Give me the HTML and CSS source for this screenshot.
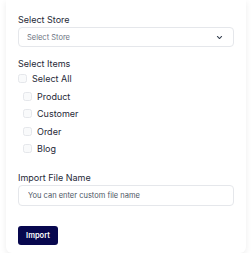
FILE: index.html
```html
<!DOCTYPE html>
<html lang="en">

<head>
    <meta charset="UTF-8">
    <meta name="viewport" content="width=device-width, initial-scale=1">
    <title>Import</title>
    <link rel="stylesheet" href="styles.css">
</head>

<body>

    <div class="card">
        <div class="field">
            <label class="label">Select Store</label>
            <div class="select">
                <span>Select Store</span>
                <svg class="chevron" width="7" height="7" viewBox="0 0 10 10">
                    <path d="M2 3.5 L5 6.5 L8 3.5" fill="none" stroke="#374151" stroke-width="1.5" stroke-linecap="round" stroke-linejoin="round" />
                </svg>
            </div>
        </div>

        <div class="field items-field">
            <label class="label">Select Items</label>
            <div class="check-row check-all">
                <span class="box"></span>
                <span>Select All</span>
            </div>
            <div class="items">
                <div class="check-row"><span class="box"></span><span>Product</span></div>
                <div class="check-row"><span class="box"></span><span>Customer</span></div>
                <div class="check-row"><span class="box"></span><span>Order</span></div>
                <div class="check-row"><span class="box"></span><span>Blog</span></div>
            </div>
        </div>

        <div class="field">
            <label class="label">Import File Name</label>
            <input class="input" type="text" placeholder="You can enter custom file name">
        </div>

        <button class="import-button">Import</button>
    </div>

</body>

</html>
```

FILE: styles.css
```css
* {
    margin: 0;
    padding: 0;
    box-sizing: border-box;
}

body {
    font-family: Inter, "Noto Sans", sans-serif;
    background: #ffffff;
    color: #1f2937;
    padding: 0 6px;
}

.card {
    background: #ffffff;
    border-radius: 0 0 6px 6px;
    box-shadow: 0 2px 6px rgba(0, 0, 0, 0.08);
    padding: 14px 12px 8px 12px;
    display: flex;
    flex-direction: column;
    width: 240px;
    height: 253px;
}

.field {
    display: flex;
    flex-direction: column;
    margin-bottom: 11px;
}

.items-field {
    margin-bottom: 14px;
}

.label {
    font-size: 9px;
    font-weight: 400;
    color: #1f2937;
    margin-bottom: 2px;
    line-height: 11px;
}

.select {
    height: 20px;
    border: 1px solid #e5e7eb;
    border-radius: 4px;
    display: flex;
    align-items: center;
    justify-content: space-between;
    padding: 0 10px 0 8px;
    font-size: 7.5px;
    color: #6b7280;
}

.check-row {
    display: flex;
    align-items: center;
    gap: 5px;
    font-size: 9px;
    font-weight: 400;
    color: #1f2937;
    height: 17.5px;
}

.check-all {
    margin-top: -1px;
}

.items {
    padding-left: 5px;
}

.box {
    width: 9px;
    height: 9px;
    border: 1px solid #e5e7eb;
    border-radius: 2.5px;
    background: #f9fafb;
}

.input {
    height: 21px;
    border: 1px solid #e5e7eb;
    border-radius: 4px;
    padding: 0 9px;
    font-family: Inter, "Noto Sans", sans-serif;
    font-size: 7.5px;
    color: #374151;
    outline: none;
}

.input::placeholder {
    color: #4b5563;
}

.import-button {
    align-self: flex-start;
    margin-top: 9px;
    width: 40px;
    height: 20px;
    background: #07074e;
    color: #ffffff;
    border: none;
    border-radius: 3px;
    font-family: Inter, "Noto Sans", sans-serif;
    font-size: 7.5px;
    font-weight: 600;
}
```
